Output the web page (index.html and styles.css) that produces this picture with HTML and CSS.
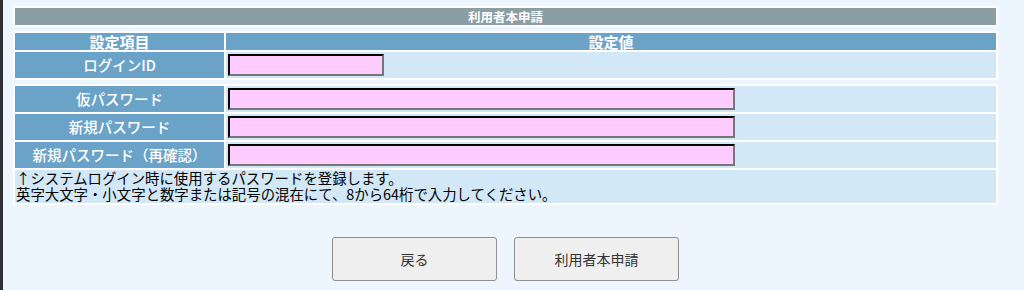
FILE: index.html
```html
<!DOCTYPE html>
<html>

<head>
    <title>利用者本申請</title>
    <link rel="stylesheet" href="styles.css">
</head>

<body>
    <div class="page">
        <table class="title-table">
            <tr>
                <td class="title-cell">利用者本申請</td>
            </tr>
        </table>

        <table class="form-table">
            <tr>
                <th class="head-cell label-col">設定項目</th>
                <th class="head-cell">設定値</th>
            </tr>
            <tr>
                <td class="label-cell">ログインID</td>
                <td class="value-cell"><input class="field field-short" type="text" /></td>
            </tr>
        </table>

        <table class="form-table pw-table">
            <tr>
                <td class="label-cell label-col">仮パスワード</td>
                <td class="value-cell"><input class="field field-long" type="password" /></td>
            </tr>
            <tr>
                <td class="label-cell">新規パスワード</td>
                <td class="value-cell"><input class="field field-long" type="password" /></td>
            </tr>
            <tr>
                <td class="label-cell">新規パスワード（再確認）</td>
                <td class="value-cell"><input class="field field-long" type="password" /></td>
            </tr>
            <tr>
                <td class="note-cell" colspan="2">↑システムログイン時に使用するパスワードを登録します。<br>英字大文字・小文字と数字または記号の混在にて、8から64桁で入力してください。</td>
            </tr>
        </table>

        <div class="buttons">
            <button type="button" class="btn">戻る</button>
            <button type="submit" class="btn">利用者本申請</button>
        </div>
    </div>
</body>

</html>
```

FILE: styles.css
```css
body {
    margin: 0;
    padding: 0;
    background-color: #edf6fe;
    font-family: "Noto Sans CJK JP", "Noto Sans", sans-serif;
}

.page {
    min-height: 290px;
    border-left: 3px solid #2e2f33;
    padding: 6px 26px 0 10px;
    box-sizing: border-box;
}

table {
    width: 985px;
    border-collapse: separate;
    border-spacing: 2px;
    background-color: #ffffff;
}

.title-table {
    margin-bottom: 4px;
}

.title-cell {
    height: 17px;
    padding: 0;
    background-color: #8b9ea3;
    color: #ffffff;
    font-size: 12.5px;
    font-weight: bold;
    text-align: center;
    line-height: 17px;
}

.form-table {
    margin-bottom: 4px;
}

.head-cell {
    height: 17px;
    padding: 0;
    background-color: #6ba3c8;
    color: #ffffff;
    font-size: 15px;
    font-weight: bold;
    line-height: 17px;
}

.label-col {
    width: 209px;
}

.label-cell {
    height: 26px;
    padding: 0;
    background-color: #6ba3c8;
    color: #ffffff;
    font-size: 14.5px;
    font-weight: 500;
    text-align: center;
    line-height: 26px;
}

.value-cell {
    height: 26px;
    padding: 0 0 0 2px;
    background-color: #d3e8f7;
    vertical-align: middle;
}

.field {
    display: block;
    height: 22px;
    box-sizing: border-box;
    margin: 0;
    padding: 0 2px;
    background-color: #ffccff;
    border: 2px inset #767676;
    border-top-color: #333333;
    border-left-color: #333333;
    font-size: 14px;
}

.field-short {
    width: 156px;
}

.field-long {
    width: 507px;
}

.note-cell {
    height: 33px;
    padding: 0 1px 1px;
    box-sizing: border-box;
    background-color: #d3e8f7;
    color: #000000;
    font-size: 14.4px;
    line-height: 16px;
    vertical-align: top;
}

.buttons {
    display: flex;
    justify-content: center;
    gap: 17px;
    margin-top: 32px;
    width: 985px;
}

.btn {
    width: 165px;
    height: 44px;
    background-color: #efefef;
    border: 1px solid #8f8f8f;
    border-radius: 3px;
    color: #333333;
    font-family: "Noto Sans CJK JP", "Noto Sans", sans-serif;
    font-size: 14px;
    cursor: pointer;
}
```
